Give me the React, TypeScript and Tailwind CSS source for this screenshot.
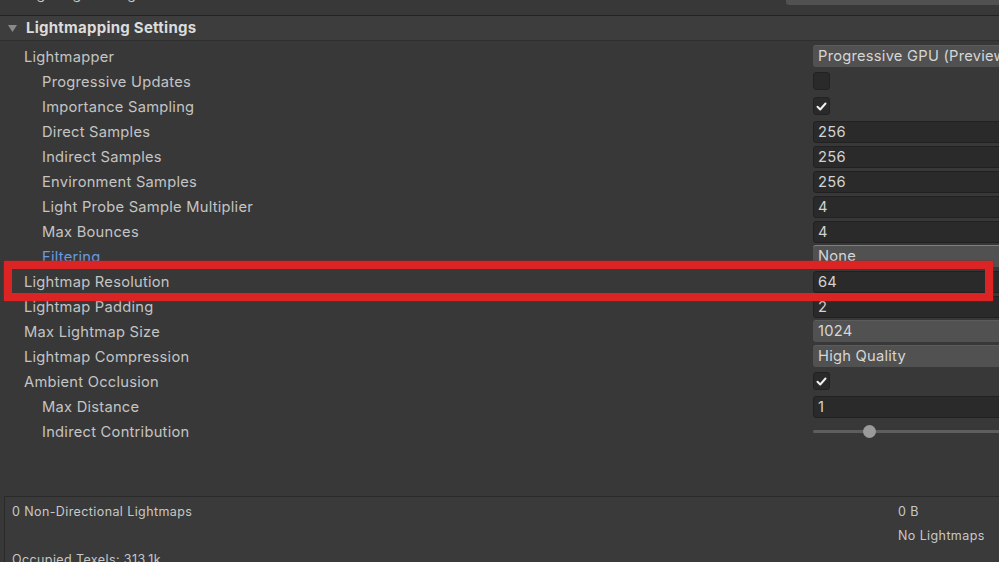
import React from 'react'

type Field =
  | { kind: 'dropdown'; value: string; focus?: boolean }
  | { kind: 'number'; value: string }
  | { kind: 'check'; checked: boolean }
  | { kind: 'slider'; pos: number }

type Row = {
  label: string
  indent?: boolean
  blue?: boolean
  field: Field
}

const rows: Row[] = [
  { label: 'Lightmapper', field: { kind: 'dropdown', value: 'Progressive GPU (Preview)' } },
  { label: 'Progressive Updates', indent: true, field: { kind: 'check', checked: false } },
  { label: 'Importance Sampling', indent: true, field: { kind: 'check', checked: true } },
  { label: 'Direct Samples', indent: true, field: { kind: 'number', value: '256' } },
  { label: 'Indirect Samples', indent: true, field: { kind: 'number', value: '256' } },
  { label: 'Environment Samples', indent: true, field: { kind: 'number', value: '256' } },
  { label: 'Light Probe Sample Multiplier', indent: true, field: { kind: 'number', value: '4' } },
  { label: 'Max Bounces', indent: true, field: { kind: 'number', value: '4' } },
  { label: 'Filtering', indent: true, blue: true, field: { kind: 'dropdown', value: 'None', focus: true } },
  { label: 'Lightmap Resolution', field: { kind: 'number', value: '64' } },
  { label: 'Lightmap Padding', field: { kind: 'number', value: '2' } },
  { label: 'Max Lightmap Size', field: { kind: 'dropdown', value: '1024' } },
  { label: 'Lightmap Compression', field: { kind: 'dropdown', value: 'High Quality' } },
  { label: 'Ambient Occlusion', field: { kind: 'check', checked: true } },
  { label: 'Max Distance', indent: true, field: { kind: 'number', value: '1' } },
  { label: 'Indirect Contribution', indent: true, field: { kind: 'slider', pos: 56 } },
]

function Check() {
  return (
    <svg width="13" height="13" viewBox="0 0 13 13" fill="none">
      <path d="M2.5 6.8 L5.2 9.5 L10.5 3.5" stroke="#f0f0f0" strokeWidth="2" strokeLinecap="round" strokeLinejoin="round" />
    </svg>
  )
}

function FieldView({ field }: { field: Field }) {
  if (field.kind === 'check') {
    return (
      <div className="w-[17px] h-[18px] mt-[3px] rounded-[3px] bg-[#2a2a2a] border border-[#222] flex items-center justify-center">
        {field.checked && <Check />}
      </div>
    )
  }
  if (field.kind === 'slider') {
    return (
      <div className="h-[25px] flex items-center relative">
        <div className="h-[3px] w-full bg-[#5e5e5e] rounded-full" />
        <div
          className="absolute top-[6px] w-[13px] h-[13px] rounded-full bg-[#9a9a9a]"
          style={{ left: field.pos - 6 }}
        />
      </div>
    )
  }
  if (field.kind === 'dropdown') {
    return (
      <div
        className={`h-[22px] mt-[1px] rounded-l-[3px] bg-[#515151] flex items-center pl-[5px] text-[#d6d6d6] border-t ${
          field.focus ? 'border-[#5c86b3] bg-[#4b4b4b]' : 'border-[#5c5c5c]'
        }`}
      >
        {field.value}
      </div>
    )
  }
  return (
    <div className="h-[22px] mt-[2px] rounded-l-[3px] bg-[#2a2a2a] border border-[#212121] flex items-center pl-[4px] text-[#d2d2d2]">
      {field.value}
    </div>
  )
}

export default function App() {
  return (
    <div
      className="relative w-[999px] h-[562px] overflow-hidden bg-[#383838] text-[#c4c4c4] text-[14.7px] tracking-[0.25px]"
      style={{ fontFamily: 'Inter, "Noto Sans", sans-serif' }}
    >
      {/* partial row above, scrolled mostly out of view */}
      <div className="h-[15px] overflow-hidden flex items-start">
        <div className="w-[813px] pl-[24px] leading-[18px] -mt-[15px]">Lighting Settings Asset</div>
        <div className="w-[220px] h-[22px] -mt-[17px] rounded-l-[3px] bg-[#515151]" />
      </div>
      <div className="h-px bg-[#232323]" />

      {/* section header */}
      <div className="h-[25px] bg-[#3d3d3d] border-b border-[#2f2f2f] flex items-center">
        <svg width="26" height="25" viewBox="0 0 26 25" className="shrink-0">
          <path d="M8 9 L17 9 L12.5 16 Z" fill="#8a8a8a" />
        </svg>
        <span className="text-[#dcdcdc] font-bold text-[15px]">Lightmapping Settings</span>
      </div>

      <div className="pt-[3px]">
        {rows.map((r) => (
          <div key={r.label} className="h-[25px] flex">
            <div
              className={`w-[813px] shrink-0 flex items-center pt-[1px] ${r.indent ? 'pl-[42px]' : 'pl-[24px]'} ${
                r.blue ? 'text-[#6b9be0]' : ''
              }`}
            >
              {r.label}
            </div>
            <div className="w-[220px] shrink-0">
              <FieldView field={r.field} />
            </div>
          </div>
        ))}
      </div>

      {/* stats panel */}
      <div className="mt-[52px] ml-[4px] border-t border-l border-[#2a2a2a] bg-[#3a3a3a] h-[80px] pt-[3px] text-[12.5px] tracking-[0.4px] text-[#c8c8c8]">
        <div className="grid grid-cols-[893px_1fr] auto-rows-[24px]">
          <div className="pl-[7px] flex items-center">0 Non-Directional Lightmaps</div>
          <div className="flex items-center">0 B</div>
          <div />
          <div className="flex items-center">No Lightmaps</div>
          <div className="pl-[7px] flex items-center">Occupied Texels: 313.1k</div>
          <div />
        </div>
      </div>

      {/* red highlight annotation */}
      <div className="absolute left-[4px] top-[261px] w-[989px] h-[40px] border-[8px] border-[#dc2424] shadow-[0_0_2px_#a02020]" />
    </div>
  )
}
